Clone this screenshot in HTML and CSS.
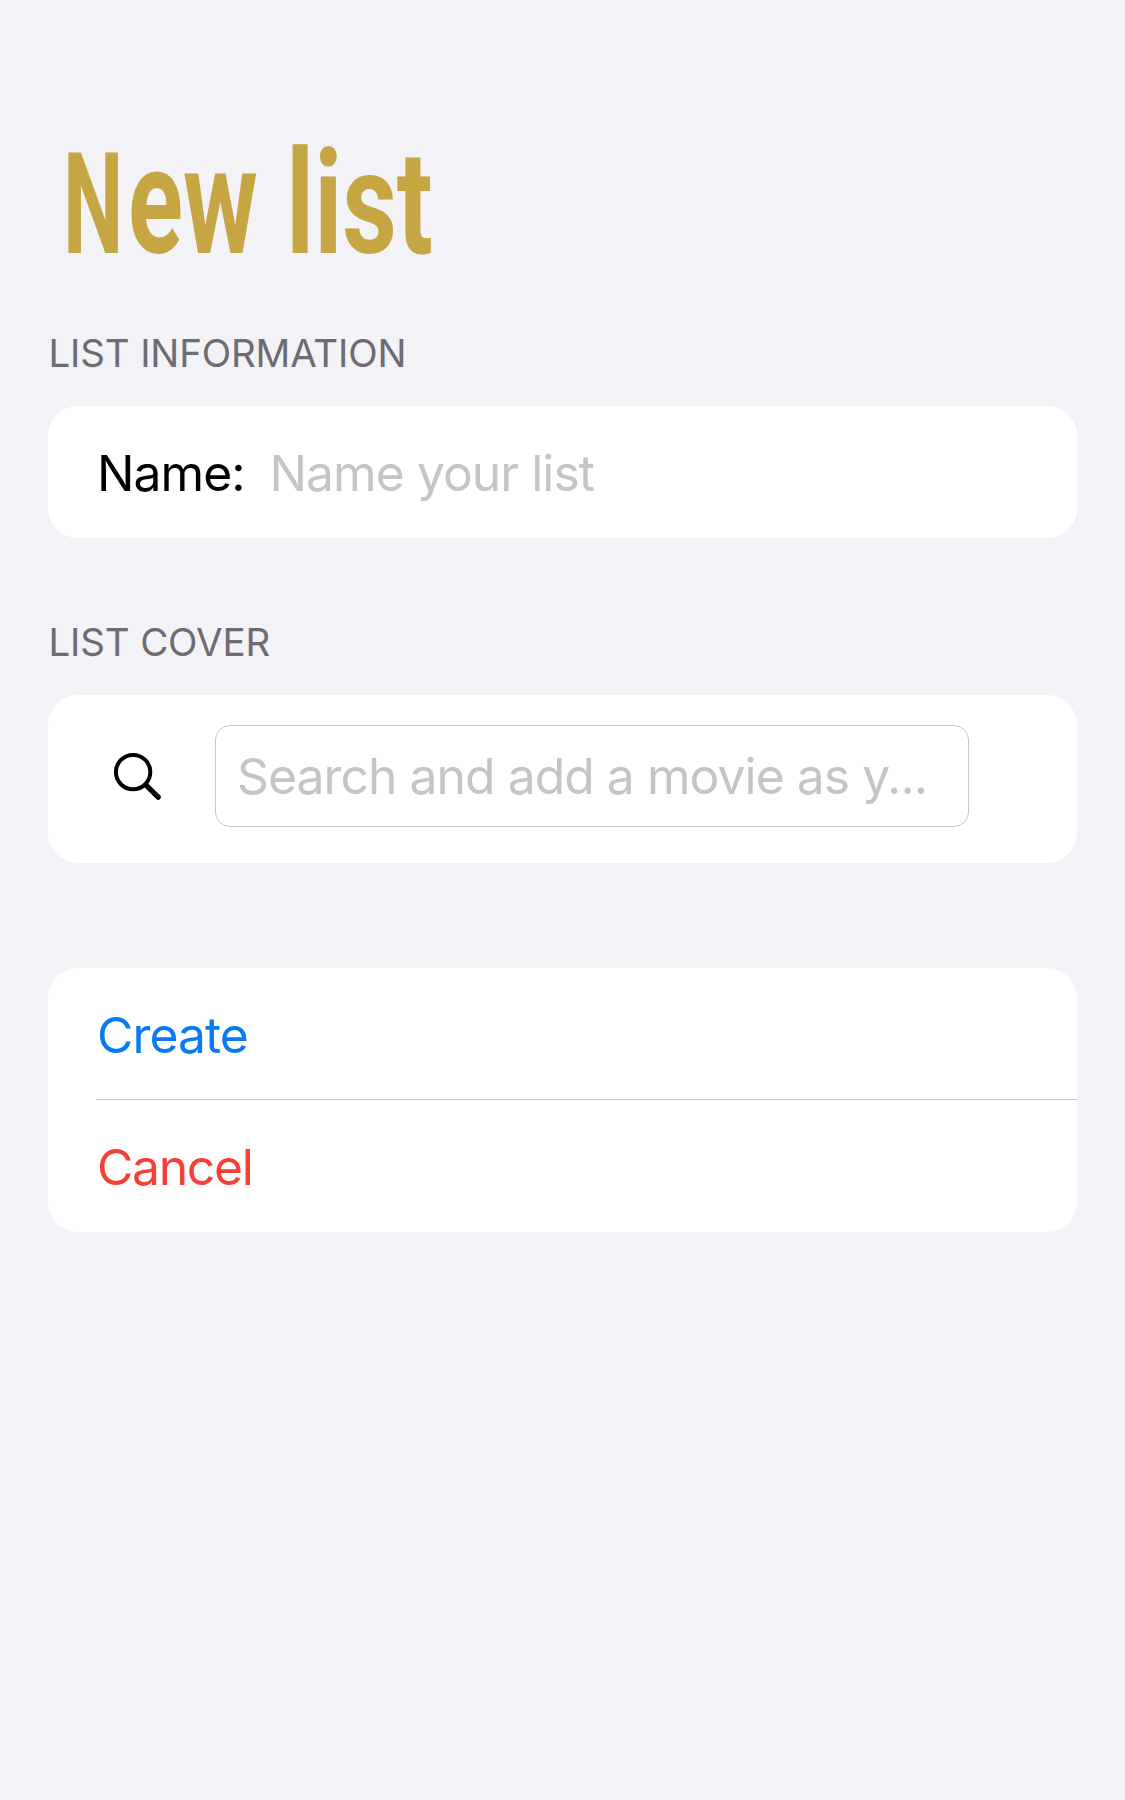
FILE: index.html
```html
<!DOCTYPE html>
<html lang="en">
<head>
<meta charset="utf-8">
<title>New list</title>
<link rel="stylesheet" href="styles.css">
</head>
<body>
<main class="page">
  <h1 class="title"><span class="cap">N</span><span class="lower">ew </span><span class="word">list</span></h1>

  <h2 class="label">LIST INFORMATION</h2>
  <section class="card name-row">
    <span>Name:</span>
    <span class="placeholder">Name your list</span>
  </section>

  <h2 class="label">LIST COVER</h2>
  <section class="card cover-row">
    <svg class="search-icon" width="50" height="50" viewBox="0 0 50 50" fill="none" stroke="#000" stroke-linecap="round">
      <circle cx="21.1" cy="21.1" r="17.2" stroke-width="4"/>
      <path d="M34 34.2L46.2 46.2" stroke-width="5.3"/>
    </svg>
    <div class="search-field placeholder">Search and add a movie as y...</div>
  </section>

  <section class="card actions">
    <div class="action create">Create</div>
    <div class="action cancel">Cancel</div>
  </section>
</main>
</body>
</html>
```
FILE: styles.css
```css
* { box-sizing: border-box; }

body {
  margin: 0;
  background: #f2f2f7;
  color: #000;
  font: 400 49.8px/60px Inter, "Liberation Sans", sans-serif;
  letter-spacing: -0.95px;
}

.page {
  min-height: 1800px;
  padding: 122px 48px 0;
}

.title {
  display: flex;
  align-items: baseline;
  height: 160px;
  margin: 0 0 47px;
  padding-left: 15px;
  color: #c6a543;
  font: 700 141px/160px Roboto, sans-serif;
  letter-spacing: 0;
  white-space: pre;
}

.title span { transform-origin: left; }
.cap { width: 64.6px; transform: scaleX(0.605); }
.lower { width: 158.2px; font-size: 150px; transform: scaleX(0.679); }
.word { width: 150px; font-size: 145px; transform: scaleX(0.733); }

.label {
  margin: 0 0 29px;
  padding-left: 0.5px;
  color: #6d6c72;
  font-size: 38.5px;
  font-weight: 400;
  line-height: 48px;
  letter-spacing: -0.17px;
}

.card {
  border-radius: 30px;
  background: #fff;
}

.placeholder { color: #c5c5c7; }

.name-row {
  display: flex;
  align-items: center;
  gap: 25px;
  height: 132px;
  margin-bottom: 80px;
  padding: 2px 49px 0;
}

.name-row span:first-child { width: 147.5px; }

.cover-row {
  display: flex;
  align-items: flex-start;
  height: 168px;
  margin-bottom: 105px;
  padding-top: 30px;
}

.search-icon {
  flex: none;
  margin: 26px 53px 0 64px;
}

.search-field {
  width: 754px;
  height: 102px;
  border: 1px solid #c8c8ca;
  border-radius: 15px;
  padding: 0 0 0 21px;
  line-height: 100px;
  white-space: nowrap;
}

.actions { padding-left: 48px; }

.action {
  height: 132px;
  padding: 2px 0 0 1px;
  line-height: 131px;
}

.create {
  border-bottom: 1px solid #c6c6c8;
  color: #087af5;
}

.cancel {
  color: #f44037;
  letter-spacing: -1.3px;
}
```
